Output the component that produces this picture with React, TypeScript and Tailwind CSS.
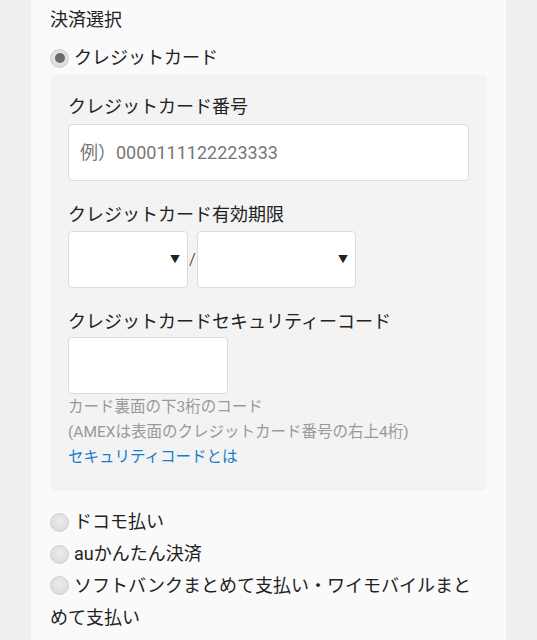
import React from "react"

const Radio = ({ checked = false }: { checked?: boolean }) => (
    <span className="inline-flex items-center justify-center w-[19px] h-[19px] rounded-full bg-[radial-gradient(circle_at_50%_40%,#ececec,#d6d6d6)] border border-[#cfcfcf] shrink-0 mr-[5px]">
        {checked && <span className="w-[10px] h-[10px] rounded-full bg-[#6a6a6a]" />}
    </span>
)

const SelectBox = ({ width }: { width: string }) => (
    <div className={`${width} h-[57px] bg-white border border-[#dcdcdc] rounded-[4px] flex items-center justify-end pr-[7px]`}>
        <span className="text-[10px] text-[#222]">▼</span>
    </div>
)

export default function App() {
    return (
        <div className="min-h-[640px] bg-[#efefef] font-['Roboto','Noto_Sans_CJK_JP',sans-serif] text-[#222]">
            <div className="mx-[31px] bg-[#fafafa] px-[19px] pt-[5px] pb-[10px] min-h-[640px]">
                <h2 className="text-[18px] leading-[30px]">決済選択</h2>
                <label className="flex items-center mt-[8px] text-[18px] leading-[30px]">
                    <Radio checked />
                    クレジットカード
                </label>

                <div className="mt-[2px] bg-[#f3f3f3] rounded-[5px] px-[18px] pt-[17px] pb-[21px]">
                    <p className="text-[18px] leading-[30px]">クレジットカード番号</p>
                    <div className="mt-[2px] h-[57px] bg-white border border-[#dcdcdc] rounded-[4px] flex items-center px-[11px]">
                        <span className="text-[18px] text-[#777]">例）0000111122223333</span>
                    </div>

                    <p className="mt-[19px] text-[18px] leading-[30px]">クレジットカード有効期限</p>
                    <div className="mt-[1px] flex items-center">
                        <SelectBox width="w-[120px]" />
                        <span className="w-[9px] text-center text-[17px] font-light text-[#222]">/</span>
                        <SelectBox width="w-[159px]" />
                    </div>

                    <p className="mt-[19px] text-[18px] leading-[30px]">クレジットカードセキュリティーコード</p>
                    <div className="w-[160px] h-[57px] bg-white border border-[#dcdcdc] rounded-[4px]" />
                    <div className="mt-[1px] text-[15.5px] leading-[25px]">
                        <p className="text-[#999]">カード裏面の下3桁のコード</p>
                        <p className="text-[#999]">(AMEXは表面のクレジットカード番号の右上4桁)</p>
                        <a className="text-[#1a7bc9]">セキュリティコードとは</a>
                    </div>
                </div>

                <div className="mt-[15px] text-[18px] leading-[32px]">
                    <label className="flex items-center">
                        <Radio />
                        ドコモ払い
                    </label>
                    <label className="flex items-center">
                        <Radio />
                        auかんたん決済
                    </label>
                    <label className="block">
                        <span className="inline-flex align-[-3px]"><Radio /></span>
                        ソフトバンクまとめて支払い・ワイモバイルまとめて支払い
                    </label>
                </div>
            </div>
        </div>
    )
}
